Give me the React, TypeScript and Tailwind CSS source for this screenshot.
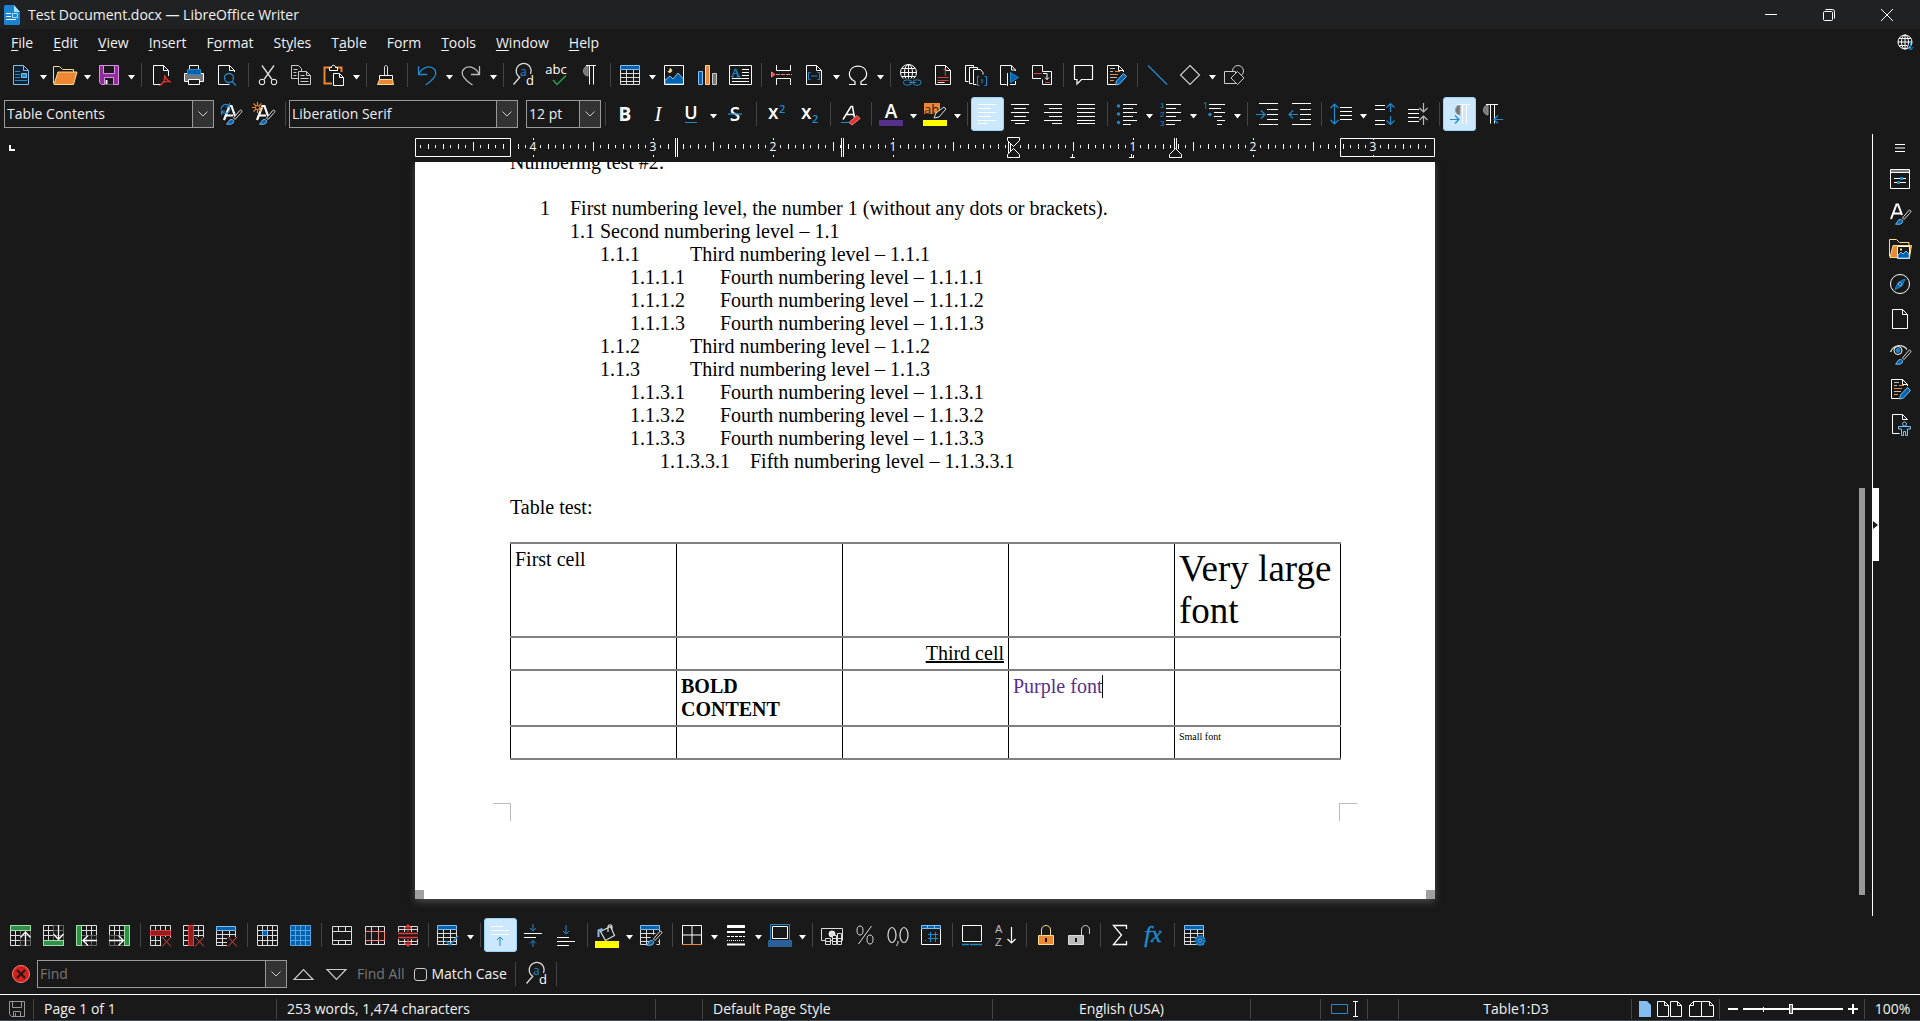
import { Fragment, useState } from "react";
import type { ReactNode } from "react";

function Icon({ children }: { children: ReactNode }) {
  return (
    <svg width="25" height="24" viewBox="0 0 25 24" fill="none" stroke="#fff" aria-hidden="true" className="shrink-0 overflow-visible">
      {children}
    </svg>
  );
}

const page = "M4.5 2.5h10l5 5v14h-15z";
const fold = "M14.5 2.5v5h5";
const grid = "M2.5 2.5h20v20h-20zM7.5 2.5v20M12.5 2.5v20M17.5 2.5v20M2.5 7.5h20M2.5 12.5h20M2.5 17.5h20";

const Brush = () => (
  <>
    <path d="M22.5 8.5c-1-1-2 0-3 1.500l-5 6 1.500 1.500 5.500-6c1-1 2-2 1-3z" fill="#191919" stroke="#ddd" />
    <path d="M7.500 22c2-.5 1.500-4 4.500-4.500 2.500 0 3.500 1.500 2 3.500-1.500 1.500-4 1.500-6.500 1z" fill="#0063b1" stroke="#83beec" />
  </>
);

const Pencil = () => (
  <path d="M11.500 22l1-4 7-7.500 3 3-7 7.500z" fill="#0063b1" stroke="#83beec" />
);

const RedCross = () => <path d="M14 14l9 9.500M23 14l-9 9.500" stroke="#e03e3e" />;

const Ball = () => (
  <>
    <circle cx="10.5" cy="10.5" r="8" />
    <ellipse cx="10.5" cy="10.5" rx="4" ry="8" />
    <path d="M10.500 2.500v16M2.500 10.500h16M4 6.500h13M4 14.500h13" />
  </>
);

const SmallTable = ({ x = 2 }: { x?: number }) => (
  <g transform={`translate(${x - 2} 0)`}>
    <path d="M2.500 7v14.500h19V7M8.500 7v14.500M15.500 7v14.500M2.500 10.500h19M2.500 14.500h19M2.500 18.500h19" stroke="#ddd" />
    <path d="M2.500 2.500h19v4h-19z" fill="#0063b1" stroke="#83beec" />
  </g>
);

const Search = () => (
  <>
    <path d="M9 14.500A7.500 7.500 0 1 1 19.500 11M9 14l-6.500 7.500" stroke="#ddd" strokeWidth="1.3" />
    <text x="9" y="13" fontSize="12" fontFamily="Open Sans, sans-serif" stroke="none" fill="#1e8bcd">a</text>
    <text x="15" y="22" fontSize="13" fontFamily="Open Sans, sans-serif" stroke="none" fill="#fff">d</text>
  </>
);

const icons: Record<string, ReactNode> = {
  newDoc: (
    <>
      <path d={page} fill="#10222f" stroke="#83beec" />
      <path d={fold} stroke="#83beec" />
      <path d="M6 8.500h5M6 11.500h5M6 14.500h5M6 17.500h12" stroke="#1e8bcd" />
      <path d="M12.500 10.500h5v4h-5z" fill="#1e8bcd" stroke="#83beec" />
    </>
  ),
  open: (
    <>
      <path d="M.5 20.500v-17h6l3 3h11v3" stroke="#f8db8f" />
      <path d="M1 21.500l4-12.500h19l-3.500 12.500z" fill="#ed8733" stroke="#f8db8f" />
    </>
  ),
  save: (
    <>
      <path d="M2.500 2.500h19v19h-17l-2-2z" fill="#922e9b" stroke="#d692e0" />
      <path d="M6.500 2.500h11v8h-11z" fill="#191919" stroke="#d692e0" />
      <path d="M7.500 21.500v-7h9v7" fill="#191919" stroke="#d692e0" />
      <path d="M9.500 17v4" stroke="#fff" strokeWidth="2" />
    </>
  ),
  pdf: (
    <>
      <path d="M19.500 13V7.500l-5-5h-10v19h8" />
      <path d={fold} />
      <path d="M15.500 12.500c1.500 3 3 6 6.500 6.500M15.500 12.500c1 4-1.500 8-4 9.500 1.500-3 6-4.500 10.500-3" stroke="#d8342f" strokeWidth="1.400" />
    </>
  ),
  print: (
    <>
      <path d="M7.500 8V2.500h9V8" />
      <path d="M2.500 10.500h19v8h-19z" fill="#777" />
      <path d="M5.500 6.500h13v5h-13z" fill="#0063b1" stroke="#1e8bcd" />
      <path d="M6.500 16.500h11v5h-11z" fill="#191919" />
    </>
  ),
  preview: (
    <>
      <path d="M19.500 9V7.500l-5-5h-11v19h11" />
      <path d={fold} />
      <circle cx="14" cy="15" r="4.500" stroke="#1e8bcd" strokeWidth="1.300" />
      <path d="M17 18.500l4 4" stroke="#1e8bcd" strokeWidth="1.300" />
    </>
  ),
  cut: (
    <>
      <path d="M6 2.500l10 14M18 2.500l-10 14" stroke="#ddd" strokeWidth="1.300" />
      <circle cx="6" cy="19" r="2.800" />
      <circle cx="18" cy="19" r="2.800" />
    </>
  ),
  copy: (
    <g stroke="#ccc">
      <path d="M9.500 15.500h-7v-13h7l3 3v3M4.500 6.500h4M4.500 9.500h3M4.500 12.500h3" />
      <path d="M9.500 8.500h8l4 4v9h-12zM17.500 8.500v4h4M11.500 12.500h4M11.500 15.500h8M11.500 18.500h8" fill="#191919" />
    </g>
  ),
  paste: (
    <>
      <path d="M10 20.500H2.500V4.500h17V9" stroke="#ed8733" strokeWidth="2" />
      <path d="M7.500 7.500v-3h2c0-3 4-3 4 0h2v3z" fill="#191919" />
      <path d="M11.500 10.500h6l4 4v8h-10zM17.500 10.500v4h4" fill="#191919" />
    </>
  ),
  clone: (
    <>
      <path d="M10.500 12V4c0-2 3-2 3 0v8" stroke="#ddd" />
      <path d="M5.500 12.500h13v4h-13z" />
      <path d="M5.500 16.500h13l1 5h-16z" fill="#ed8733" stroke="#f8db8f" />
    </>
  ),
  undo: <path d="M3.500 3v8.500H12M3.500 11.500C8 3 16 2 19.500 6.500c4 5-2 11-9 15.500" stroke="#1e8bcd" strokeWidth="1.300" />,
  redo: <path d="M20.500 3v8.500H12M20.500 11.500C16 3 8 2 4.500 6.500c-4 5 2 11 9 15.500" stroke="#bbb" strokeWidth="1.300" />,
  find: <Search />,
  spell: (
    <>
      <text x="12" y="11" textAnchor="middle" fontSize="13" fontFamily="Open Sans, sans-serif" stroke="none" fill="#fff">abc</text>
      <path d="M9 17l4 4.500 9-9" stroke="#22a04a" strokeWidth="1.500" />
    </>
  ),
  pilcrow: (
    <>
      <path d="M11 3a4.500 5 0 0 0 0 10z" fill="#777" stroke="#999" />
      <path d="M9 2.500h10M12.500 2.500v19M16.500 2.500v19" />
    </>
  ),
  table: <SmallTable />,
  image: (
    <>
      <path d="M3 21v-4l5-4 3 3 5-6 5.500 6v5z" fill="#0063b1" stroke="#83beec" />
      <path d="M2.500 2.500h19v19h-19z" />
      <path d="M8 5.500a2 2 0 1 1-2 3c1.500 0 2-1 2-3z" fill="#f8db8f" stroke="#f8db8f" />
    </>
  ),
  chart: (
    <>
      <path d="M3.500 8.500h4v13h-4z" fill="#0063b1" stroke="#83beec" />
      <path d="M10.500 2.500h4v19h-4z" fill="#ed8733" stroke="#f8db8f" />
      <path d="M17.500 10.500h4v11h-4z" fill="#777" stroke="#ccc" />
    </>
  ),
  textbox: (
    <>
      <path d="M1.500 2.500h22v19h-22zM14 6.500h7M14 9.500h7M14 12.500h7M4 15.500h17M4 18.500h17" />
      <text x="3" y="14" fontSize="13" fontFamily="Liberation Serif, serif" stroke="#1e8bcd" strokeWidth=".4" fill="#1e8bcd">A</text>
    </>
  ),
  pageBreak: (
    <>
      <path d="M7.500 2v5.500h14V2M7.500 22v-6.500h14V22" />
      <path d="M7 11.500h16" stroke="#ff8080" strokeDasharray="4 1" />
      <path d="M2.500 9v5l3.500-2.500z" fill="#e03e3e" stroke="#ff8080" />
    </>
  ),
  field: (
    <>
      <path d={page} />
      <path d={fold} />
      <path d="M8.500 9.500h-2v7h2M15.500 9.500h2v7h-2M9 13h6" stroke="#1e8bcd" />
    </>
  ),
  omega: <path d="M3 21.500h6v-3C4 16 3 12 3.500 9.500 5 1 19 1 20.500 9.500 21 12 20 16 15 18.500v3h6" strokeWidth="1.200" />,
  link: (
    <>
      <g transform="translate(0 -1)"><Ball /></g>
      <path d="M5 15.500h19v7H5z" fill="#191919" stroke="none" />
      <rect x="5.500" y="17" width="8" height="5" rx="2.500" stroke="#1e8bcd" />
      <rect x="15" y="17" width="8" height="5" rx="2.500" stroke="#1e8bcd" />
      <path d="M11 19.500h7" stroke="#1e8bcd" />
    </>
  ),
  footnote: (
    <>
      <path d={page} />
      <path d={fold} />
      <path d="M6.500 14.500h11M6.500 17.500h11" stroke="#e03e3e" />
      <path d="M6.500 19.500h7" stroke="#ddd" />
      <text x="11" y="13" fontSize="10" fontFamily="Open Sans, sans-serif" stroke="none" fill="#e03e3e">1</text>
    </>
  ),
  index: (
    <>
      <path d="M4.500 18.500h-3v-16h8v2M8.500 20.500h-3v-16h8v2M12.500 21.500h-3v-15h7l2.500 3v2" />
      <path d="M15.500 13.500h-2v9h2M20.500 13.500h2v9h-2M18 16v4" stroke="#1e8bcd" />
    </>
  ),
  bookmark: (
    <>
      <path d="M18.500 8V7l-4-4.500h-11v19h6M14.500 2.500V7h4M13 21.500h5.500V18M10.500 10v13" />
      <path d="M13.500 9.500v10l8-5z" fill="#0063b1" stroke="#1e8bcd" />
    </>
  ),
  crossRef: (
    <>
      <path d="M11 15.500H2.500v-13h10v6M12.500 8.500h9v13h-9v-5" />
      <path d="M4 10.500h8M15 19.500h5" stroke="#e03e3e" />
      <path d="M13 10.500h4v6M15 14.500l2 2 2-2" />
    </>
  ),
  comment: <path d="M3.500 2.500h18v14h-11l-4.500 4.500v-4.500h-2.500z" strokeWidth="1.200" />,
  track: (
    <>
      <path d="M19.500 9V7.500l-5-5h-11v19h8M14.500 2.500v5h5" />
      <path d="M6 5.500h5M6 8.500h3M6 14.500h7M6 17.500h2" stroke="#bbb" />
      <path d="M11 8.500h5M6 11.500h8M6 17.500h4" stroke="#ed8733" />
      <Pencil />
    </>
  ),
  line: <path d="M3 2.500l19 19" stroke="#1e8bcd" strokeWidth="1.300" />,
  diamond: <path d="M12 2.500l9.500 9.500-9.500 9.500L2.500 12z" stroke="#ccc" strokeWidth="1.200" />,
  shapes: (
    <g stroke="#ccc">
      <circle cx="16" cy="8" r="5.500" />
      <path d="M2.500 8.500h11v12h-11z" fill="#191919" />
      <path d="M15.500 8.500l6.500 6.500-6.500 6.500L9 15z" fill="#191919" />
    </g>
  ),
  styleUpdate: (
    <>
      <path d="M5 18L10.500 4h2L16 14M7 13.500h7" strokeWidth="2.200" />
      <path d="M2 7.500C3 2 8 1 10.500 4.500M10.500 1v4h-4M11 7c-1 5-6 5.500-8.500 2.500M2.500 13V9h4" stroke="#1e8bcd" strokeWidth="1.200" />
      <Brush />
    </>
  ),
  styleNew: (
    <>
      <path d="M5 18L10.500 4h2L16 14M7 13.500h7" strokeWidth="2.200" />
      <path d="M5.500 0v11M0 5.500h11M1.500 1.500l8 8M9.500 1.500l-8 8" stroke="#ed8733" strokeWidth="1.200" />
      <circle cx="5.500" cy="5.500" r="2" fill="#191919" stroke="#ed8733" />
      <Brush />
    </>
  ),
  bold: <text x="12" y="19" textAnchor="middle" fontSize="19" fontWeight="700" fontFamily="Open Sans, sans-serif" stroke="none" fill="#fff">B</text>,
  italic: <text x="12" y="19" textAnchor="middle" fontSize="21" fontStyle="italic" fontFamily="Liberation Serif, serif" stroke="none" fill="#fff">I</text>,
  underline: (
    <>
      <text x="12" y="17" textAnchor="middle" fontSize="18" fontWeight="600" fontFamily="Open Sans, sans-serif" stroke="none" fill="#fff">U</text>
      <path d="M6 20.500h12" stroke="#1e8bcd" />
    </>
  ),
  strike: (
    <>
      <text x="12" y="19" textAnchor="middle" fontSize="19" fontWeight="600" fontFamily="Open Sans, sans-serif" stroke="none" fill="#fff">S</text>
      <path d="M5 12h14" stroke="#1e8bcd" strokeWidth="1.300" />
    </>
  ),
  superscript: (
    <>
      <text x="4" y="17" fontSize="19" fontWeight="600" fontFamily="Open Sans, sans-serif" stroke="none" fill="#fff">x</text>
      <text x="15" y="11" fontSize="11" fontWeight="600" fontFamily="Open Sans, sans-serif" stroke="none" fill="#1e8bcd">2</text>
    </>
  ),
  subscript: (
    <>
      <text x="4" y="17" fontSize="19" fontWeight="600" fontFamily="Open Sans, sans-serif" stroke="none" fill="#fff">x</text>
      <text x="15" y="21" fontSize="11" fontWeight="600" fontFamily="Open Sans, sans-serif" stroke="none" fill="#1e8bcd">2</text>
    </>
  ),
  clear: (
    <>
      <path d="M5 17.500L13 4.500h1.500l2 11M8 12.500h8" strokeWidth="1.500" />
      <path d="M3 20.500h10" stroke="#1e8bcd" />
      <path d="M11 20.500l8-7 3 3-8 6.500z" fill="#e03030" stroke="#ff8080" />
    </>
  ),
  fontColor: (
    <>
      <text x="12" y="16" textAnchor="middle" fontSize="19" fontWeight="600" fontFamily="Open Sans, sans-serif" stroke="none" fill="#fff">A</text>
      <path d="M0 18h24v6H0z" fill="#55308d" stroke="none" />
    </>
  ),
  highlight: (
    <>
      <path d="M1 1h16v11H1z" fill="#ed8733" stroke="none" />
      <text x="1" y="12" fontSize="13" fontFamily="Open Sans, sans-serif" stroke="none" fill="#222">ab</text>
      <path d="M11 16l2-5 8-6 2 2-7 8z" fill="#191919" stroke="#ddd" />
      <path d="M0 18h24v6H0z" fill="#ff0" stroke="none" />
    </>
  ),
  alignLeft: <path d="M3 2.500h18M3 6.500h13M3 10.500h18M3 14.500h13M3 18.500h18M3 21.500h9" />,
  alignCenter: <path d="M3 2.500h18M6 6.500h12M3 10.500h18M6 14.500h12M3 18.500h18M7 21.500h10" />,
  alignRight: <path d="M3 2.500h18M8 6.500h13M3 10.500h18M8 14.500h13M3 18.500h18M11 21.500h10" />,
  justify: <path d="M3 2.500h18M3 6.500h18M3 10.500h18M3 14.500h18M3 18.500h18M3 21.500h18" />,
  bullets: (
    <>
      <path d="M8 2.500h14M8 6.500h10M8 10.500h14M8 14.500h10M8 18.500h14M8 22.500h8" />
      <g fill="#1e8bcd" stroke="none">
        <circle cx="3.500" cy="4" r="1.700" />
        <circle cx="3.500" cy="12" r="1.700" />
        <circle cx="3.500" cy="20.500" r="1.700" />
      </g>
    </>
  ),
  numbering: (
    <>
      <path d="M7 2.500h15M7 6.500h10M7 10.500h15M7 14.500h10M7 18.500h15M7 22.500h9" />
      <g fill="#1e8bcd" stroke="none" fontSize="8" fontFamily="Liberation Sans, sans-serif">
        <text x="1" y="6">1</text>
        <text x="1" y="15">2</text>
        <text x="1" y="24">3</text>
      </g>
    </>
  ),
  outline: (
    <>
      <path d="M6 2.500h16M6 6.500h12M11 10.500h11M11 14.500h8M14 18.500h8M14 22.500h5" />
      <text x="0" y="7" fontSize="9" fontFamily="Open Sans, sans-serif" fill="#1e8bcd" stroke="none">1</text>
      <circle cx="7" cy="12.500" r="1.700" fill="#1e8bcd" stroke="none" />
    </>
  ),
  indent: (
    <>
      <path d="M4 1.500h19M12 7.500h11M12 12.500h11M12 17.500h11M4 22.500h19" />
      <path d="M1 12.500h9M6 8.500l4 4-4 4" stroke="#1e8bcd" strokeWidth="1.200" />
    </>
  ),
  outdent: (
    <>
      <path d="M4 1.500h19M12 7.500h11M12 12.500h11M12 17.500h11M4 22.500h19" />
      <path d="M1 12.500h9M5 8.500l-4 4 4 4" stroke="#1e8bcd" strokeWidth="1.200" />
    </>
  ),
  spacing: (
    <>
      <path d="M11 5.500h12M11 9.500h12M11 13.500h12M11 17.500h12" />
      <path d="M5.500 2v20M1.500 6l4-4 4 4M1.500 18l4 4 4-4" stroke="#1e8bcd" strokeWidth="1.200" />
    </>
  ),
  paraMore: (
    <>
      <path d="M2 3.500h10M2 7.500h10M2 18.500h10M2 22.500h10" />
      <path d="M17.500 1.500V10M13.500 5.500l4-4 4 4M17.500 14v8.500M13.500 18.500l4 4 4-4" stroke="#1e8bcd" strokeWidth="1.200" />
    </>
  ),
  paraLess: (
    <>
      <path d="M2 7.500h11M2 11.500h11M2 15.500h11M2 19.500h11" />
      <path d="M17.500 1v9M13.500 6l4 4 4-4M17.500 23v-9M13.500 18l4-4 4 4" stroke="#bbb" strokeWidth="1.200" />
    </>
  ),
  ltr: (
    <>
      <path d="M13 3a4.500 5 0 0 0 0 10z" fill="#777" stroke="#999" />
      <path d="M11 2.500h12M15.500 2.500v19M19.500 2.500v19" />
      <path d="M3 17.500h9M8 13.500l4 4-4 4" stroke="#1e8bcd" strokeWidth="1.200" />
    </>
  ),
  rtl: (
    <>
      <path d="M8 3a4.500 5 0 0 0 0 10z" fill="#777" stroke="#999" />
      <path d="M6 2.500h12M10.500 2.500v19M14.500 2.500v19" />
      <path d="M14 17.500h9M18 13.500l-4 4 4 4" stroke="#1e8bcd" strokeWidth="1.200" />
    </>
  ),
  rowAbove: (
    <>
      <path d={grid} stroke="#ddd" />
      <path d="M2.500 2.500h20v5h-20z" fill="#309048" stroke="#a1ddaa" />
      <path d="M12 8h11v15H12z" fill="#191919" stroke="none" opacity=".6" />
      <path d="M17.500 23V9M12.500 14.500l5-5.500 5 5.500" strokeWidth="1.300" />
    </>
  ),
  rowBelow: (
    <>
      <path d={grid} stroke="#ddd" />
      <path d="M2.500 17.500h20v5h-20z" fill="#309048" stroke="#a1ddaa" />
      <path d="M12 2h11v15H12z" fill="#191919" stroke="none" opacity=".6" />
      <path d="M17.500 2v14.500M12.500 11l5 5.500 5-5.500" strokeWidth="1.300" />
    </>
  ),
  colBefore: (
    <>
      <path d={grid} stroke="#ddd" />
      <path d="M2.500 2.500h5v20h-5z" fill="#309048" stroke="#a1ddaa" />
      <path d="M8 12h15v11H8z" fill="#191919" stroke="none" opacity=".6" />
      <path d="M23 17.500H9M14 12.500l-5 5 5 5" strokeWidth="1.300" />
    </>
  ),
  colAfter: (
    <>
      <path d={grid} stroke="#ddd" />
      <path d="M17.500 2.500h5v20h-5z" fill="#309048" stroke="#a1ddaa" />
      <path d="M2 12h15v11H2z" fill="#191919" stroke="none" opacity=".6" />
      <path d="M2 17.500h14.500M11.500 12.500l5 5-5 5" strokeWidth="1.300" />
    </>
  ),
  rowDelete: (
    <>
      <path d={grid} stroke="#ddd" />
      <path d="M2.500 7.500h20v5h-20z" fill="#8f2020" stroke="#e03e3e" />
      <path d="M13 14h10v10H13z" fill="#191919" stroke="none" />
      <RedCross />
    </>
  ),
  colDelete: (
    <>
      <path d={grid} stroke="#ddd" />
      <path d="M7.500 2.500h5v20h-5z" fill="#8f2020" stroke="#e03e3e" />
      <path d="M13 14h10v10H13z" fill="#191919" stroke="none" />
      <RedCross />
    </>
  ),
  tableDelete: (
    <>
      <g transform="translate(0 1)"><SmallTable /></g>
      <path d="M13 14h10v10H13z" fill="#191919" stroke="none" />
      <RedCross />
    </>
  ),
  cellSelect: (
    <>
      <path d={grid} stroke="#ddd" />
      <path d="M7.500 7.500h5v5h-5z" fill="#0063b1" stroke="#83beec" />
    </>
  ),
  tableSelect: <path d={grid} fill="#0063b1" stroke="#5aa3dd" />,
  merge: <path d="M3.500 3.500h19v18h-19zM3.500 8.500h19M3.500 17.500h19M9.500 3.500v5M16.500 3.500v5M9.500 17.500v4M16.500 17.500v4" stroke="#ddd" />,
  split: (
    <>
      <path d="M3.500 3.500h19v18h-19zM9.500 3.500v5M16.500 3.500v5M9.500 17.500v4M16.500 17.500v4" stroke="#ddd" />
      <path d="M3.500 8.500h19v9h-19zM9.500 8.500v9M16.500 8.500v9" stroke="#ff8080" />
    </>
  ),
  splitTable: (
    <>
      <path d="M3.500 9V3.500h19V9M3.500 6.500h19M9.500 3.500V9M16.500 3.500V9M3.500 16v5.500h19V16M3.500 18.500h19M9.500 16v5.500M16.500 16v5.500" stroke="#ddd" />
      <path d="M3 10.500h20M3 14.500h20M13 9V2M9.500 5.500L13 2l3.500 3.500M13 16v7M9.500 19.500L13 23l3.500-3.500" stroke="#e83a3a" strokeWidth="1.300" />
    </>
  ),
  tableStyle: (
    <>
      <SmallTable x={1} />
      <path d="M10 18l4 4 8-9" stroke="#1e8bcd" strokeWidth="1.500" />
    </>
  ),
  alignTop: (
    <>
      <path d="M3 3.500h12M3 7.500h18M3 11.500h18" />
      <path d="M12 23v-9M9 17l3-3 3 3" stroke="#1e8bcd" />
    </>
  ),
  alignMiddle: (
    <>
      <path d="M3 10.500h18M3 14.500h12" />
      <path d="M12 1v7M9 5l3 3 3-3M12 24v-6.500M9 20.500l3-3 3 3" stroke="#1e8bcd" />
    </>
  ),
  alignBottom: (
    <>
      <path d="M3 14.500h12M3 18.500h18M3 22.500h12" />
      <path d="M12 2v9M9 8l3 3 3-3" stroke="#1e8bcd" />
    </>
  ),
  fill: (
    <>
      <path d="M5.500 8.500l10-5 4 9-9 5zM13 9V4c0-3 4-3 4 0v2" stroke="#ddd" strokeWidth="1.200" />
      <path d="M3.500 14V7.500l4-1.500" stroke="#83beec" strokeWidth="2" />
      <path d="M0 18h24v7H0z" fill="#ff0" stroke="none" />
    </>
  ),
  autoformat: (
    <>
      <SmallTable x={1} />
      <path d="M12 13l9-5 3 2-8 14H9z" fill="#191919" stroke="none" />
      <Brush />
    </>
  ),
  borders: (
    <>
      <path d="M2.500 21V2.500h19V21M12 2.500v19M2.500 12h19" />
      <path d="M2 21.500h20" stroke="#ed8733" />
    </>
  ),
  borderStyle: (
    <>
      <path d="M3 3.500h18" strokeWidth="3" />
      <path d="M3 9h18" strokeWidth="2" />
      <path d="M3 13.500h18" strokeDasharray="3 1" />
      <path d="M3 17.500h18" strokeDasharray="1 1" />
      <path d="M3 21.500h18" strokeWidth="2" />
    </>
  ),
  borderColor: (
    <>
      <path d="M2.500 1.500h19v16h-19z" stroke="#1e8bcd" />
      <path d="M4.500 3.500h15v12h-15z" />
      <path d="M0 17h24v7H0z" fill="#2a6099" stroke="none" />
    </>
  ),
  currency: (
    <>
      <path d="M1.500 5.500h21v12h-21z" stroke="#ddd" />
      <circle cx="12" cy="11" r="3" fill="#ddd" />
      <path d="M5.500 15.500h5v6h-5zM12.500 12.500h4v9h-4zM17.500 10.500h4v11h-4zM5.500 18.500h5M12.500 15.500h9M12.500 18.500h9" fill="#191919" stroke="#ddd" />
    </>
  ),
  percent: (
    <>
      <path d="M18.500 3l-13 18" stroke="#ddd" />
      <ellipse cx="7" cy="7.500" rx="3" ry="4.500" stroke="#ddd" />
      <ellipse cx="17" cy="16.500" rx="3" ry="4.500" stroke="#ddd" />
    </>
  ),
  decimal: (
    <>
      <ellipse cx="6" cy="12" rx="4" ry="7.500" stroke="#ddd" strokeWidth="1.200" />
      <ellipse cx="18" cy="12" rx="4" ry="7.500" stroke="#ddd" strokeWidth="1.200" />
      <path d="M12 18v2l-1.500 3" stroke="#ddd" />
    </>
  ),
  date: (
    <>
      <path d="M2.500 6v15.500h19V6" />
      <path d="M2.500 2.500h19v3h-19zM8.500 2.500v3M15.500 2.500v3" fill="#0063b1" stroke="#83beec" />
      <path d="M9 11.500h10M9 15.500h10M11.500 9v10M16.500 9v10M6 17.500h1" stroke="#1e8bcd" />
    </>
  ),
  caption: (
    <>
      <path d="M2.500 2.500h19v16h-19z" />
      <path d="M2 21.500h7M10 21.500h12" stroke="#1e8bcd" strokeWidth="1.500" />
    </>
  ),
  sort: (
    <>
      <g stroke="none" fill="#bbb" fontSize="11" fontFamily="Liberation Sans, sans-serif">
        <text x="2" y="10">A</text>
        <text x="2" y="23">Z</text>
      </g>
      <path d="M18.500 4v16M14.500 16l4 4 4-4" strokeWidth="1.200" />
    </>
  ),
  lock: (
    <>
      <path d="M7.500 12V7c0-6 9-6 9 0v5" stroke="#f8db8f" />
      <path d="M4.500 12.500h15v9h-15z" fill="#ed8733" stroke="#f8db8f" />
      <path d="M12 15v4" stroke="#191919" strokeWidth="2" />
    </>
  ),
  unlock: (
    <>
      <path d="M14.500 12V7c0-6 8-6 8 0v4" stroke="#ccc" />
      <path d="M1.500 12.500h15v9h-15z" fill="#bbb" stroke="#ddd" />
      <path d="M9 15v4" stroke="#191919" strokeWidth="2" />
    </>
  ),
  sum: <path d="M18.500 6V2.500H5.500l8 9.500-8 9.500h13V18" strokeWidth="1.300" />,
  formula: <text x="12" y="19" textAnchor="middle" fontSize="24" fontStyle="italic" fontFamily="Liberation Serif, serif" stroke="#1e8bcd" strokeWidth=".4" fill="#1e8bcd">fx</text>,
  tableProps: (
    <>
      <SmallTable />
      <circle cx="18" cy="17.500" r="4.500" fill="#0063b1" stroke="#1e8bcd" strokeWidth="2" strokeDasharray="2 1" />
      <circle cx="18" cy="17.500" r="1.500" fill="#191919" stroke="#83beec" />
    </>
  ),
  properties: (
    <>
      <path d="M2.500 2.500h19v19h-19z" />
      <path d="M3 3h18v2.500H3z" fill="#777" stroke="none" />
      <path d="M3 5.500h18M6 11.500h12M6 15.500h12" />
      <path d="M12 10h3v3h-3zM9 14h3v3H9z" fill="#1e8bcd" stroke="none" />
    </>
  ),
  styles: (
    <>
      <path d="M3 17L8.500 2.500h1.500L14 13M5 11.500h8" strokeWidth="2" />
      <Brush />
    </>
  ),
  gallery: (
    <>
      <path d="M1.500 19.500V2.500h7l3 3h9.500v3" stroke="#f8db8f" />
      <path d="M2 20.500l3-12h18.500l-2 12z" fill="#ed8733" stroke="#f8db8f" />
      <path d="M9.500 9.500h12v12h-12z" fill="#191919" />
      <path d="M10 21v-3l3-3 2 2 3-3 3 3v4z" fill="#0063b1" stroke="#83beec" />
      <path d="M12 12.500h2" stroke="#f8db8f" strokeWidth="2" />
    </>
  ),
  navigator: (
    <>
      <circle cx="12" cy="12" r="9.500" />
      <path d="M17 7l-3 7-7 3.500 3-7z" fill="#0063b1" stroke="#1e8bcd" />
      <circle cx="12" cy="12" r="1.500" fill="#191919" stroke="#83beec" />
    </>
  ),
  pageDeck: (
    <>
      <path d={page} />
      <path d={fold} />
    </>
  ),
  inspector: (
    <>
      <path d="M2.500 10C6 2 15 2 19 7.500" stroke="#ddd" strokeWidth="1.300" />
      <circle cx="10" cy="8.500" r="4" fill="#191919" />
      <circle cx="10" cy="8.500" r="2" fill="#1e8bcd" stroke="#1e8bcd" />
      <Brush />
    </>
  ),
  a11y: (
    <>
      <path d="M19.500 7.500l-5-5h-10v19h7M14.500 2.500v5h5" />
      <circle cx="16.500" cy="12" r="2" stroke="#83beec" />
      <path d="M10.500 14.500h12v2.500h-3v6.500h-2v-4h-2v4h-2V17h-3z" fill="#10222f" stroke="#83beec" />
    </>
  ),
  findUp: <path d="M3 17.500h19L12.500 7.500z" stroke="#ccc" strokeWidth="1.200" />,
  findDown: <path d="M3 7.500h19l-9.500 10z" stroke="#ccc" strokeWidth="1.200" />,
  closeFind: (
    <>
      <circle cx="13" cy="12" r="8.500" fill="#d3201a" stroke="#ff8080" />
      <path d="M9 8l8 8M17 8l-8 8" stroke="#191919" strokeWidth="2" />
    </>
  ),
};

type Tool = { icon: string; label: string; menu?: boolean; on?: boolean } | "sep";

const standardTools: Tool[] = [
  { icon: "newDoc", label: "New", menu: true },
  { icon: "open", label: "Open", menu: true },
  { icon: "save", label: "Save", menu: true },
  "sep",
  { icon: "pdf", label: "Export as PDF" },
  { icon: "print", label: "Print" },
  { icon: "preview", label: "Print Preview" },
  "sep",
  { icon: "cut", label: "Cut" },
  { icon: "copy", label: "Copy" },
  { icon: "paste", label: "Paste", menu: true },
  "sep",
  { icon: "clone", label: "Clone Formatting" },
  "sep",
  { icon: "undo", label: "Undo", menu: true },
  { icon: "redo", label: "Redo", menu: true },
  "sep",
  { icon: "find", label: "Find and Replace" },
  { icon: "spell", label: "Spelling" },
  { icon: "pilcrow", label: "Formatting Marks" },
  "sep",
  { icon: "table", label: "Insert Table", menu: true },
  { icon: "image", label: "Insert Image" },
  { icon: "chart", label: "Insert Chart" },
  { icon: "textbox", label: "Insert Text Box" },
  "sep",
  { icon: "pageBreak", label: "Insert Page Break" },
  { icon: "field", label: "Insert Field", menu: true },
  { icon: "omega", label: "Insert Special Character", menu: true },
  "sep",
  { icon: "link", label: "Insert Hyperlink" },
  { icon: "footnote", label: "Insert Footnote" },
  { icon: "index", label: "Insert Index Entry" },
  { icon: "bookmark", label: "Insert Bookmark" },
  { icon: "crossRef", label: "Insert Cross-reference" },
  "sep",
  { icon: "comment", label: "Insert Comment" },
  { icon: "track", label: "Track Changes" },
  "sep",
  { icon: "line", label: "Insert Line" },
  { icon: "diamond", label: "Basic Shapes", menu: true },
  { icon: "shapes", label: "Show Draw Functions" },
];

const formatTools: Tool[] = [
  { icon: "bold", label: "Bold" },
  { icon: "italic", label: "Italic" },
  { icon: "underline", label: "Underline", menu: true },
  { icon: "strike", label: "Strikethrough" },
  "sep",
  { icon: "superscript", label: "Superscript" },
  { icon: "subscript", label: "Subscript" },
  "sep",
  { icon: "clear", label: "Clear Formatting" },
  "sep",
  { icon: "fontColor", label: "Font Color", menu: true },
  { icon: "highlight", label: "Highlighting", menu: true },
  "sep",
  { icon: "alignLeft", label: "Align Left", on: true },
  { icon: "alignCenter", label: "Align Center" },
  { icon: "alignRight", label: "Align Right" },
  { icon: "justify", label: "Justified" },
  "sep",
  { icon: "bullets", label: "Bullets", menu: true },
  { icon: "numbering", label: "Numbering", menu: true },
  { icon: "outline", label: "Outline", menu: true },
  "sep",
  { icon: "indent", label: "Increase Indent" },
  { icon: "outdent", label: "Decrease Indent" },
  "sep",
  { icon: "spacing", label: "Line Spacing", menu: true },
  { icon: "paraMore", label: "Increase Paragraph Spacing" },
  { icon: "paraLess", label: "Decrease Paragraph Spacing" },
  "sep",
  { icon: "ltr", label: "Left-To-Right", on: true },
  { icon: "rtl", label: "Right-To-Left" },
];

const tableTools: Tool[] = [
  { icon: "rowAbove", label: "Insert Row Above" },
  { icon: "rowBelow", label: "Insert Row Below" },
  { icon: "colBefore", label: "Insert Column Before" },
  { icon: "colAfter", label: "Insert Column After" },
  "sep",
  { icon: "rowDelete", label: "Delete Rows" },
  { icon: "colDelete", label: "Delete Columns" },
  { icon: "tableDelete", label: "Delete Table" },
  "sep",
  { icon: "cellSelect", label: "Select Cell" },
  { icon: "tableSelect", label: "Select Table" },
  "sep",
  { icon: "merge", label: "Merge Cells" },
  { icon: "split", label: "Split Cells" },
  { icon: "splitTable", label: "Split Table" },
  "sep",
  { icon: "tableStyle", label: "Optimize Size", menu: true },
  "sep",
  { icon: "alignTop", label: "Align Top", on: true },
  { icon: "alignMiddle", label: "Center Vertically" },
  { icon: "alignBottom", label: "Align Bottom" },
  "sep",
  { icon: "fill", label: "Background Color", menu: true },
  { icon: "autoformat", label: "AutoFormat Styles" },
  "sep",
  { icon: "borders", label: "Borders", menu: true },
  { icon: "borderStyle", label: "Border Style", menu: true },
  { icon: "borderColor", label: "Border Color", menu: true },
  "sep",
  { icon: "currency", label: "Format as Currency" },
  { icon: "percent", label: "Format as Percent" },
  { icon: "decimal", label: "Format as Decimal" },
  { icon: "date", label: "Number Format" },
  "sep",
  { icon: "caption", label: "Insert Caption" },
  { icon: "sort", label: "Sort" },
  "sep",
  { icon: "lock", label: "Protect Cells" },
  { icon: "unlock", label: "Unprotect Cells" },
  "sep",
  { icon: "sum", label: "Sum" },
  { icon: "formula", label: "Insert Formula" },
  "sep",
  { icon: "tableProps", label: "Table Properties" },
];

const menus = [
  ["", "F", "ile"],
  ["", "E", "dit"],
  ["", "V", "iew"],
  ["", "I", "nsert"],
  ["F", "o", "rmat"],
  ["St", "y", "les"],
  ["T", "a", "ble"],
  ["Fo", "r", "m"],
  ["", "T", "ools"],
  ["", "W", "indow"],
  ["", "H", "elp"],
];

const decks = [
  ["properties", "Properties"],
  ["styles", "Styles"],
  ["gallery", "Gallery"],
  ["navigator", "Navigator"],
  ["pageDeck", "Page"],
  ["inspector", "Style Inspector"],
  ["track", "Manage Changes"],
  ["a11y", "Accessibility Check"],
];

const levels = [
  { n: "1", text: "First numbering level, the number 1 (without any dots or brackets).", pad: "pl-[30px]", tab: "w-[30px]" },
  { n: "1.1", text: "Second numbering level – 1.1", pad: "pl-[60px]", tab: "w-[30px]" },
  { n: "1.1.1", text: "Third numbering level – 1.1.1", pad: "pl-[90px]", tab: "w-[90px]" },
  { n: "1.1.1.1", text: "Fourth numbering level – 1.1.1.1", pad: "pl-[120px]", tab: "w-[90px]" },
  { n: "1.1.1.2", text: "Fourth numbering level – 1.1.1.2", pad: "pl-[120px]", tab: "w-[90px]" },
  { n: "1.1.1.3", text: "Fourth numbering level – 1.1.1.3", pad: "pl-[120px]", tab: "w-[90px]" },
  { n: "1.1.2", text: "Third numbering level – 1.1.2", pad: "pl-[90px]", tab: "w-[90px]" },
  { n: "1.1.3", text: "Third numbering level – 1.1.3", pad: "pl-[90px]", tab: "w-[90px]" },
  { n: "1.1.3.1", text: "Fourth numbering level – 1.1.3.1", pad: "pl-[120px]", tab: "w-[90px]" },
  { n: "1.1.3.2", text: "Fourth numbering level – 1.1.3.2", pad: "pl-[120px]", tab: "w-[90px]" },
  { n: "1.1.3.3", text: "Fourth numbering level – 1.1.3.3", pad: "pl-[120px]", tab: "w-[90px]" },
  { n: "1.1.3.3.1", text: "Fifth numbering level – 1.1.3.3.1", pad: "pl-[150px]", tab: "w-[90px]" },
];

function Separator() {
  return (
    <span className="flex h-6 w-2 shrink-0 justify-center">
      <span className="h-6 w-px bg-[#444]" />
    </span>
  );
}

function ToolButton({ icon, label, on }: { icon: string; label: string; on?: boolean }) {
  return (
    <button
      type="button"
      aria-label={label}
      aria-pressed={on}
      className={`flex h-[34px] w-[33px] shrink-0 items-center justify-center rounded-sm ${on ? "bg-[#cce8ff] ring-1 ring-inset ring-[#99d1ff]" : ""}`}
    >
      <Icon>{icons[icon]}</Icon>
    </button>
  );
}

function Tools({ items }: { items: Tool[] }) {
  return (
    <>
      {items.map((t, i) =>
        t === "sep" ? (
          <Separator key={i} />
        ) : (
          <Fragment key={i}>
            <ToolButton icon={t.icon} label={t.label} on={t.on} />
            {t.menu && (
              <button aria-label={`${t.label} options`} className="flex h-[34px] w-[11px] shrink-0 items-center justify-center pt-1">
                <svg width="7" height="5" viewBox="0 0 7 5" fill="#fff" aria-hidden="true">
                  <path d="M0 0h7L3.500 4.500z" />
                </svg>
              </button>
            )}
          </Fragment>
        )
      )}
    </>
  );
}

function DropArrow() {
  return (
    <svg width="10" height="6" viewBox="0 0 10 6" fill="none" stroke="#ccc" aria-hidden="true">
      <path d="M.5.5L5 5 9.500.5" />
    </svg>
  );
}

function Combo({ label, value, width }: { label: string; value: string; width: string }) {
  return (
    <div className={`relative h-7 shrink-0 ${width}`}>
      <select aria-label={label} className="h-7 w-full appearance-none border border-[#999] bg-[#191919] pl-[2px] text-sm text-[#eee] outline-none">
        <option>{value}</option>
      </select>
      <span className="pointer-events-none absolute inset-y-0 right-0 flex w-[22px] items-center justify-center border border-[#999] bg-[#333]">
        <DropArrow />
      </span>
    </div>
  );
}

function Ruler() {
  const zero = 598;
  const ticks = [];
  for (let k = -79; k <= 55; k++) {
    if (k % 16 === 0) continue;
    const x = Math.floor(zero + k * 7.5) + 0.5;
    const h = k % 8 === 0 ? 4.5 : k % 2 === 0 ? 2.5 : 1.5;
    ticks.push(`M${x} ${12.5 - h}V${12.5 + h}`);
  }
  const inches = [
    [118, "4"],
    [238, "3"],
    [358, "2"],
    [478, "1"],
    [718, "1"],
    [838, "2"],
    [958, "3"],
  ];
  return (
    <svg width="1020" height="28" viewBox="0 0 1020 28" fill="none" stroke="#fff" role="img" aria-label="Horizontal ruler">
      <path d="M.5 4.500h95v18H.5zM925.500 4.500h94v18h-94z" />
      <path d={ticks.join("")} />
      {inches.map(([x, n]) => (
        <Fragment key={x}>
          <text x={x} y="17" textAnchor="middle" fontSize="12" fontFamily="Open Sans, sans-serif" fill="#fff" stroke="none">{n}</text>
          <path d={`M${Number(x) + 0.5} 4v2M${Number(x) + 0.5} 21v2`} />
        </Fragment>
      ))}
      <path d="M260.500 4v19M262.500 4v19M426.500 4v19M428.500 4v19M759.500 4v12M761.500 4v12" />
      {/* left indents */}
      <path d="M592.500 3.500h12v3l-6 6-6-6zM592.500 23.500h12v-3l-6-6-6 6zM593.500 8v12M595.500 9v8" fill="#191919" />
      {/* right indent and tab stops */}
      <path d="M754.500 23.500h12v-3l-6-6-6 6z" fill="#191919" />
      <path d="M655 23.500h5M657.500 20v3M714 23.500h5M716.500 20v3" />
    </svg>
  );
}

function DocTable() {
  const cell = "h-[33px] border-x border-y-2 border-x-black border-y-[#808080] p-1 align-top";
  return (
    <table aria-label="Table1" className="w-[831px] table-fixed border-collapse">
      <tbody>
        <tr>
          <td className={cell}>First cell</td>
          <td className={cell} />
          <td className={cell} />
          <td className={cell} />
          <td className={`${cell} text-[37px] leading-[42px]`}>Very large font</td>
        </tr>
        <tr>
          <td className={cell} />
          <td className={cell} />
          <td className={`${cell} text-right underline`}>Third cell</td>
          <td className={cell} />
          <td className={cell} />
        </tr>
        <tr>
          <td className={cell} />
          <td className={`${cell} font-bold`}>BOLD CONTENT</td>
          <td className={cell} />
          <td className={`${cell} text-[#55308d]`}>
            <span className="inline-block h-[23px] border-r border-black">Purple font</span>
          </td>
          <td className={cell} />
        </tr>
        <tr>
          <td className={cell} />
          <td className={cell} />
          <td className={cell} />
          <td className={cell} />
          <td className={`${cell} text-[10px] leading-[11px]`}>Small font</td>
        </tr>
      </tbody>
    </table>
  );
}

function StatusBar() {
  const [zoom, setZoom] = useState(48);
  const cell = "flex items-center border-r border-[#444] my-1";
  return (
    <footer className="grid h-[27px] shrink-0 grid-cols-[34px_243fr_379fr_47px_290fr_258fr_70px_47px_31px_233fr_88px_145px_55px] border-t border-b border-t-white border-b-[#3d4a52] text-sm">
      <div className={`${cell} justify-center`}>
        <svg width="16" height="16" viewBox="0 0 16 16" fill="none" stroke="#999" aria-label="Document saved">
          <path d="M.5.5h15v15h-13l-2-2zM3.500.5v6h9v-6M4.500 15.500v-5h7v5M6.500 12v3" />
        </svg>
      </div>
      <div className={`${cell} pl-[10px]`}>Page 1 of 1</div>
      <div className={`${cell} pl-[10px]`}>253 words, 1,474 characters</div>
      <div className={cell} />
      <div className={`${cell} pl-[10px]`}>Default Page Style</div>
      <div className={`${cell} justify-center`}>English (USA)</div>
      <div className={cell} />
      <div className={`${cell} justify-center pl-[2px]`}>
        <svg width="28" height="16" viewBox="0 0 28 16" fill="none" aria-label="Selection mode">
          <path d="M.5 3.500h16v9H.5z" stroke="#1e8bcd" />
          <path d="M22 .5h5M24.500.5v15M22 15.500h5" stroke="#fff" />
        </svg>
      </div>
      <div className={cell} />
      <div className={`${cell} justify-center pl-[2px]`}>Table1:D3</div>
      <div className={`${cell} justify-center gap-[6px] pl-[2px]`}>
        <button aria-label="Single-page view">
          <svg width="12" height="16" viewBox="0 0 12 16" fill="#83beec"><path d="M0 0h8l4 4v12H0z" /></svg>
        </button>
        <button aria-label="Multiple-page view">
          <svg width="26" height="16" viewBox="0 0 26 16" fill="none" stroke="#fff">
            <path d="M.5.500h7l4 4v11H.5zM7.500.500v4h4M13.500.500h7l4 4v11h-11zM20.500.500v4h4" />
          </svg>
        </button>
        <button aria-label="Book view">
          <svg width="25" height="16" viewBox="0 0 25 16" fill="none" stroke="#fff">
            <path d="M12.500.500h-8l-4 4v11h12zM4.500.500v4h-4M12.500.500h8l4 4v11h-12M20.500.500v4h4" />
          </svg>
        </button>
      </div>
      <div className={`${cell} justify-center gap-[5px] pl-[2px]`}>
        <button aria-label="Zoom out" className="h-[2px] w-[10px] bg-white" />
        <div className="relative flex h-4 w-[100px] items-center">
          <span className="absolute top-[6px] left-5 h-[5px] w-px bg-white" />
          <input
            type="range"
            aria-label="Zoom"
            value={zoom}
            onChange={(e) => setZoom(Number(e.target.value))}
            className="h-[2px] w-full appearance-none bg-white outline-none [&::-webkit-slider-thumb]:h-[10px] [&::-webkit-slider-thumb]:w-1 [&::-webkit-slider-thumb]:appearance-none [&::-webkit-slider-thumb]:border [&::-webkit-slider-thumb]:border-white [&::-webkit-slider-thumb]:bg-[#777]"
          />
        </div>
        <button aria-label="Zoom in">
          <svg width="10" height="10" viewBox="0 0 10 10" stroke="#fff" strokeWidth="2"><path d="M0 5h10M5 0v10" /></svg>
        </button>
      </div>
      <div className="flex items-center justify-center">100%</div>
    </footer>
  );
}

export default function App() {
  const [query, setQuery] = useState("");
  const [matchCase, setMatchCase] = useState(false);

  return (
    <div className="flex h-screen flex-col overflow-hidden bg-[#191919] font-['Open_Sans',sans-serif] text-sm text-[#f2f2f2]">
      <header className="flex h-[29px] shrink-0 items-center bg-[#202123]">
        <svg width="16" height="20" viewBox="0 0 16 20" className="mr-2 ml-1" aria-hidden="true">
          <path d="M1.500 0H10l6 7v11.500a1.500 1.500 0 0 1-1.500 1.500h-13A1.500 1.500 0 0 1 0 18.500v-17A1.500 1.500 0 0 1 1.500 0z" fill="#1b83d0" />
          <path d="M10 0l6 7h-6z" fill="#a5e4f8" />
          <path d="M2 8.500h5M2 11.500h5M2 14.500h10" stroke="#fff" />
          <path d="M8.500 8.500h5v4h-5z" fill="#1b83d0" stroke="#a5e4f8" />
        </svg>
        <h1>Test Document.docx — LibreOffice Writer</h1>
        <div className="ml-auto flex h-full pr-1">
          <button aria-label="Minimize" className="flex w-[58px] items-center justify-center">
            <svg width="12" height="12" viewBox="0 0 12 12" stroke="#fff"><path d="M0 5.500h12" /></svg>
          </button>
          <button aria-label="Restore" className="flex w-[58px] items-center justify-center">
            <svg width="12" height="12" viewBox="0 0 12 12" fill="none" stroke="#fff">
              <rect x=".5" y="2.500" width="9" height="9" rx="1" />
              <path d="M2.500.500h7a2 2 0 0 1 2 2v7" />
            </svg>
          </button>
          <button aria-label="Close" className="flex w-[58px] items-center justify-center">
            <svg width="12" height="12" viewBox="0 0 12 12" stroke="#fff"><path d="M0 0l12 12M12 0L0 12" /></svg>
          </button>
        </div>
      </header>

      <nav aria-label="Menu bar" className="flex h-[27px] shrink-0 items-center pl-px">
        {menus.map(([before, key, after]) => (
          <button key={before + key + after} className="px-[10px]">
            {before}
            <span className="underline underline-offset-2">{key}</span>
            {after}
          </button>
        ))}
        <button aria-label="Check for updates" className="mr-[6px] ml-auto">
          <svg width="17" height="17" viewBox="0 0 17 17" fill="none" stroke="#fff">
            <circle cx="8" cy="8" r="7" />
            <ellipse cx="8" cy="8" rx="3.500" ry="7" />
            <path d="M8 1v14M1 8h14M2 4.500h12M2 11.500h8" />
            <path d="M13.500 8v8M10.500 13l3 3 3-3" stroke="#1e8bcd" />
          </svg>
        </button>
      </nav>

      <div role="toolbar" aria-label="Standard" className="flex h-[38px] shrink-0 items-center pl-[5px]">
        <Tools items={standardTools} />
      </div>

      <div role="toolbar" aria-label="Formatting" className="flex h-10 shrink-0 items-center pl-1">
        <Combo label="Paragraph style" value="Table Contents" width="mr-px w-[210px]" />
        <ToolButton icon="styleUpdate" label="Update Selected Style" />
        <ToolButton icon="styleNew" label="New Style from Selection" />
        <Separator />
        <Combo label="Font name" value="Liberation Serif" width="mr-2 w-[229px]" />
        <Combo label="Font size" value="12 pt" width="w-[75px]" />
        <Separator />
        <Tools items={formatTools} />
      </div>

      <div className="flex min-h-0 flex-1">
        <main className="flex min-w-0 flex-1 flex-col">
          <div className="grid h-7 shrink-0 grid-cols-[1fr_1020px_1fr]">
            <button aria-label="Tab stop" className="mt-[11px] ml-[9px] h-[6px] w-[6px] border-b-2 border-l-2 border-white" />
            <Ruler />
          </div>
          <div className="flex min-h-0 flex-1 flex-col items-center overflow-hidden">
            <article className="w-[1020px] bg-white font-['Liberation_Serif',serif] text-xl leading-[23px] text-black shadow-[0_3px_7px_#484848]">
              <div className="-mt-[11px] px-[95px]">
                <p className="mb-[23px]">Numbering test #2:</p>
                {levels.map((l) => (
                  <p key={l.n} className={`flex ${l.pad}`}>
                    <span className={`shrink-0 ${l.tab}`}>{l.n}</span>
                    {l.text}
                  </p>
                ))}
                <p className="my-[23px]">Table test:</p>
                <DocTable />
              </div>
              <div className="mt-[43px] flex justify-between px-[78px]">
                <span className="h-[18px] w-[18px] border-t border-r border-[#bbb]" />
                <span className="h-[18px] w-[18px] border-t border-l border-[#bbb]" />
              </div>
              <div className="mt-[69px] flex justify-between">
                <span className="h-[9px] w-[9px] bg-[#a0a0a0]" />
                <span className="h-[9px] w-[9px] bg-[#a0a0a0]" />
              </div>
            </article>
          </div>
        </main>

        <div className="flex w-[22px] shrink-0 flex-col pl-[9px]">
          <div className="flex-[354]" />
          <div className="w-[6px] flex-[407] bg-[#999]" />
          <div className="flex-[21]" />
        </div>

        <aside className="relative flex w-12 shrink-0 flex-col items-center border-l border-white pl-[7px]">
          <button aria-label="Hide sidebar" className="absolute top-[354px] left-0 flex h-[73px] w-[6px] items-center bg-white">
            <svg width="6" height="8" viewBox="0 0 6 8" fill="#191919"><path d="M0 0l5 4-5 4z" /></svg>
          </button>
          <button aria-label="Sidebar settings" className="flex h-[27px] items-center">
            <svg width="10" height="8" viewBox="0 0 10 8" stroke="#fff"><path d="M0 .5h10M0 4h10M0 7.500h10" /></svg>
          </button>
          {decks.map(([icon, label]) => (
            <button key={icon} aria-label={label} className="flex h-[35px] items-center">
              <Icon>{icons[icon]}</Icon>
            </button>
          ))}
        </aside>
      </div>

      <div role="toolbar" aria-label="Table" className="flex h-[38px] shrink-0 items-center pl-1">
        <Tools items={tableTools} />
      </div>

      <form role="search" className="flex h-10 shrink-0 items-center pl-1" onSubmit={(e) => e.preventDefault()}>
        <ToolButton icon="closeFind" label="Close Find Bar" />
        <div className="flex h-7 w-[250px] border border-[#999]">
          <input
            aria-label="Find"
            placeholder="Find"
            value={query}
            onChange={(e) => setQuery(e.target.value)}
            className="min-w-0 flex-1 bg-transparent pl-[2px] outline-none placeholder:text-[#777]"
          />
          <button type="button" aria-label="Find history" className="flex w-[21px] items-center justify-center border-l border-[#999] bg-[#333]">
            <DropArrow />
          </button>
        </div>
        <ToolButton icon="findUp" label="Find Previous" />
        <ToolButton icon="findDown" label="Find Next" />
        <button className="px-1 text-[#777]">Find All</button>
        <label className="mr-[5px] ml-[6px] flex items-center gap-1">
          <input
            type="checkbox"
            checked={matchCase}
            onChange={(e) => setMatchCase(e.target.checked)}
            className="h-[13px] w-[13px] appearance-none rounded-[3px] border border-[#ccc] checked:bg-[#1e8bcd]"
          />
          Match Case
        </label>
        <Separator />
        <ToolButton icon="find" label="Find and Replace" />
        <Separator />
      </form>

      <StatusBar />
    </div>
  );
}
